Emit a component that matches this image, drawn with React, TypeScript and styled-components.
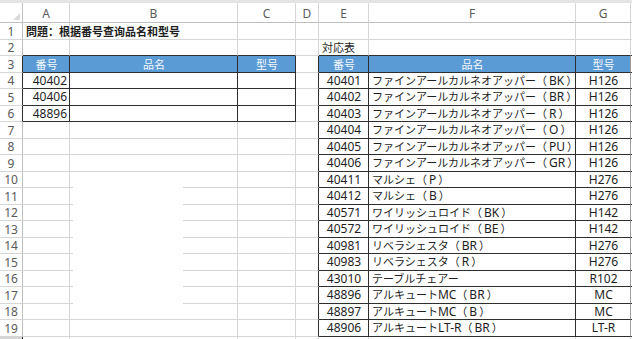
import React from "react";
import styled, { createGlobalStyle, css } from "styled-components";

const GlobalStyle = createGlobalStyle`
  html, body { margin: 0; padding: 0; background: #ffffff; overflow: hidden; }
  body { font-family: "Noto Sans", "Noto Sans CJK SC", sans-serif; color: #1e1e1e; }
  #root { width: 632px; height: 339px; overflow: hidden; }
`;

const GRID = "#d6d6d6";
const HEAD_LINE = "#bfbfbf";
const DARK = "#2e2e2e";
const BLUE = "#5b9bd5";

const Page = styled.div`
  width: 632px;
  height: 339px;
  display: flex;
  flex-direction: column;
  overflow: hidden;
`;

const TopBar = styled.div`
  height: 3px;
  flex: none;
  background: #e4e4e4;
`;

const Sheet = styled.div`
  position: relative;
  display: grid;
  grid-template-columns: 23px 47px 168px 58px 23px 50px 207px 55px 1fr;
  grid-template-rows: 20px repeat(9, 17px 16px) 17px 16px;
`;

const Corner = styled.div`
  border-right: 1px solid ${HEAD_LINE};
  border-bottom: 1px solid ${HEAD_LINE};
  display: flex;
  align-items: flex-end;
  justify-content: flex-end;
  padding: 0 2px 2px 0;
  box-sizing: border-box;
`;

const ColHeader = styled.div`
  box-sizing: border-box;
  border-right: 1px solid ${GRID};
  border-bottom: 1px solid ${HEAD_LINE};
  display: flex;
  align-items: center;
  justify-content: center;
  font-family: "Noto Sans", sans-serif;
  font-size: 12px;
  color: #5a5a5a;
  padding-top: 2px;
`;

const RowHeader = styled.div<{ $rd?: boolean; $muted?: boolean }>`
  box-sizing: border-box;
  border-right: 1px solid ${(p) => (p.$rd ? DARK : HEAD_LINE)};
  border-bottom: 1px solid ${GRID};
  display: flex;
  align-items: center;
  justify-content: center;
  font-family: "Noto Sans", sans-serif;
  font-size: 12px;
  color: #5a5a5a;
  background: ${(p) => (p.$muted ? "#d4d4d4" : "transparent")};
`;

type Align = "left" | "center" | "right";

const Cell = styled.div<{
  $rd?: string;
  $bd?: string;
  $align?: Align;
  $head?: boolean;
}>`
  box-sizing: border-box;
  border-right: 1px solid ${(p) => p.$rd || GRID};
  border-bottom: 1px solid ${(p) => p.$bd || GRID};
  display: flex;
  align-items: center;
  justify-content: ${(p) =>
    p.$align === "right" ? "flex-end" : p.$align === "center" ? "center" : "flex-start"};
  padding: 0 2px 0 3px;
  white-space: nowrap;
  overflow: visible;
  font-size: 12px;
  line-height: 1;
  min-width: 0;
  ${(p) =>
    p.$head &&
    css`
      background: ${BLUE};
      color: #f4f8fd;
      font-family: "Noto Sans CJK SC", sans-serif;
      font-size: 11px;
    `}
`;

const Title = styled.span`
  font-family: "Noto Sans CJK SC", sans-serif;
  font-weight: 700;
  font-size: 11px;
  position: relative;
  z-index: 1;
`;

const Caption = styled.span`
  font-family: "Noto Sans CJK JP", sans-serif;
  font-size: 11px;
`;

const Code = styled.span`
  font-family: "Noto Sans", sans-serif;
  font-size: 12px;
`;

const NameText = styled.span`
  font-family: "Noto Sans CJK JP", sans-serif;
  font-size: 11px;
`;

const Ascii = styled.span`
  font-family: "Noto Sans", sans-serif;
  font-size: 12px;
  padding: 0 2px;
`;

const FloatingPatch = styled.div`
  position: absolute;
  left: 73px;
  top: 182px;
  width: 110px;
  height: 125px;
  background: #ffffff;
`;

const leftRows = ["40402", "40406", "48896"];

const rightRows: [string, string, string][] = [
  ["40401", "ファインアールカルネオアッパー（BK）", "H126"],
  ["40402", "ファインアールカルネオアッパー（BR）", "H126"],
  ["40403", "ファインアールカルネオアッパー（R）", "H126"],
  ["40404", "ファインアールカルネオアッパー（O）", "H126"],
  ["40405", "ファインアールカルネオアッパー（PU）", "H126"],
  ["40406", "ファインアールカルネオアッパー（GR）", "H126"],
  ["40411", "マルシェ（P）", "H276"],
  ["40412", "マルシェ（B）", "H276"],
  ["40571", "ワイリッシュロイド（BK）", "H142"],
  ["40572", "ワイリッシュロイド（BE）", "H142"],
  ["40981", "リベラシェスタ（BR）", "H276"],
  ["40983", "リベラシェスタ（R）", "H276"],
  ["43010", "テーブルチェアー", "R102"],
  ["48896", "アルキュートMC（BR）", "MC"],
  ["48897", "アルキュートMC（B）", "MC"],
  ["48906", "アルキュートLT-R（BR）", "LT-R"],
];

const LETTERS = ["A", "B", "C", "D", "E", "F", "G", ""];
const ROWS = 20;

function inLeft(r: number, c: number) {
  return r >= 3 && r <= 6 && c >= 1 && c <= 3;
}
function inRight(r: number, c: number) {
  return r >= 3 && r <= 19 && c >= 5 && c <= 7;
}
function inTable(r: number, c: number) {
  return inLeft(r, c) || inRight(r, c);
}

function Name({ text }: { text: string }) {
  const parts = text.split(/(（[A-Za-z0-9-]+）)/);
  return (
    <NameText>
      {parts.map((p, i) => {
        if (i % 2 === 1) {
          return (
            <React.Fragment key={i}>
              （<Ascii>{p.slice(1, -1)}</Ascii>）
            </React.Fragment>
          );
        }
        const sub = p.split(/([A-Za-z0-9-]+)/);
        return sub.map((s, j) =>
          j % 2 === 1 ? (
            <Code key={`${i}-${j}`}>{s}</Code>
          ) : (
            <React.Fragment key={`${i}-${j}`}>{s}</React.Fragment>
          )
        );
      })}
    </NameText>
  );
}

function content(r: number, c: number): { node: React.ReactNode; align: Align; head?: boolean } {
  if (r === 1 && c === 1) return { node: <Title>問題：根据番号查询品名和型号</Title>, align: "left" };
  if (r === 2 && c === 5) return { node: <Caption>対応表</Caption>, align: "left" };
  if (r === 3 && (c === 1 || c === 5)) return { node: "番号", align: "center", head: true };
  if (r === 3 && (c === 2 || c === 6)) return { node: "品名", align: "center", head: true };
  if (r === 3 && (c === 3 || c === 7)) return { node: "型号", align: "center", head: true };
  if (r >= 4 && r <= 6 && c === 1) return { node: <Code>{leftRows[r - 4]}</Code>, align: "right" };
  if (r >= 4 && r <= 19 && c >= 5 && c <= 7) {
    const row = rightRows[r - 4];
    if (c === 5) return { node: <Code>{row[0]}</Code>, align: "center" };
    if (c === 6) return { node: <Name text={row[1]} />, align: "left" };
    return { node: <Code>{row[2]}</Code>, align: "center" };
  }
  return { node: null, align: "left" };
}

function CornerMark() {
  return (
    <svg width="7" height="7" viewBox="0 0 7 7">
      <polygon points="7,0 7,7 0,7" fill="#d9d9d9" />
    </svg>
  );
}

export default function App() {
  const cells: React.ReactNode[] = [];
  cells.push(
    <Corner key="corner">
      <CornerMark />
    </Corner>
  );
  LETTERS.forEach((l, i) => cells.push(<ColHeader key={`h${i}`}>{l}</ColHeader>));

  for (let r = 1; r <= ROWS; r++) {
    const partial = r === ROWS;
    cells.push(
      <RowHeader key={`r${r}`} $rd={inTable(r, 1) || partial} $muted={partial}>
        {partial ? null : r}
      </RowHeader>
    );
    for (let c = 1; c <= 8; c++) {
      let rd: string | undefined;
      let bd: string | undefined;
      if (c === 7 && inRight(r, c)) rd = "#9c9c9c";
      else if (inTable(r, c) || inTable(r, c + 1)) rd = DARK;
      if (inTable(r, c) || inTable(r + 1, c)) bd = DARK;
      if (c === 8) {
        rd = "transparent";
        if (r >= 2 && r <= 19) bd = DARK;
      }
      const { node, align, head } = content(r, c);
      cells.push(
        <Cell key={`c${r}-${c}`} $rd={rd} $bd={bd} $align={align} $head={head}>
          {node}
        </Cell>
      );
    }
  }

  return (
    <>
      <GlobalStyle />
      <Page>
        <TopBar />
        <Sheet>
          {cells}
          <FloatingPatch />
        </Sheet>
      </Page>
    </>
  );
}
